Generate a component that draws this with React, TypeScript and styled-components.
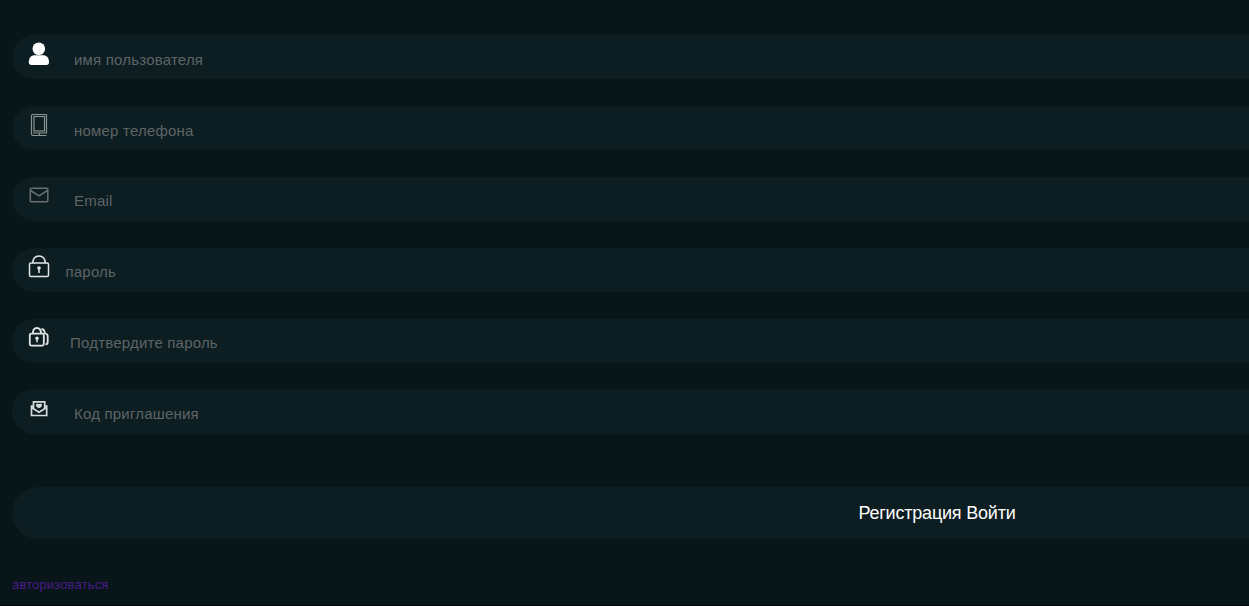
import React, { FC, ReactNode } from "react";
import styled, { createGlobalStyle } from "styled-components";

const GlobalStyle = createGlobalStyle`
  html,
  body {
    margin: 0;
    height: 100%;
    overflow: hidden;
    background-color: #081519;
  }

  * {
    box-sizing: border-box;
  }
`;

const Page = styled.main`
  width: 1874px;
  height: 606px;
  padding: 35.3px 12px 0;
  border-bottom: 1px solid #020709;
  font-family: "Liberation Sans", Arial, sans-serif;
`;

const Form = styled.form`
  display: flex;
  flex-direction: column;
`;

const Fields = styled.div`
  display: flex;
  flex-direction: column;
  gap: 26.68px;
`;

const Field = styled.label`
  display: flex;
  height: 44.15px;
  padding-left: 16px;
  border-radius: 22px;
  background-color: #0d1e22;
`;

const Icon = styled.svg`
  flex: none;
  width: 22px;
  height: 24px;
  margin-top: 7.2px;
  fill: none;
`;

const Input = styled.input<{ $gap: number }>`
  flex: 1;
  height: 20px;
  margin: 13.95px 0 0 ${({ $gap }) => $gap}px;
  padding: 0;
  border: none;
  outline: none;
  background: transparent;
  color: #fff;
  font-family: inherit;
  font-size: 15px;
  letter-spacing: 0.2px;

  &::placeholder {
    color: #5d6466;
    opacity: 1;
  }
`;

const Submit = styled.button`
  height: 52px;
  margin-top: 53.4px;
  padding: 2px 0 0;
  border: none;
  border-radius: 26px;
  background-color: #0d1e22;
  color: #fff;
  font-family: inherit;
  font-size: 18px;
  letter-spacing: -0.2px;
`;

const LoginLink = styled.a`
  align-self: flex-start;
  margin-top: 38px;
  color: #491c88;
  font-size: 13px;
  line-height: 15px;
  letter-spacing: 0.15px;
  text-decoration: none;
`;

type FieldType = {
  name: string;
  placeholder: string;
  gap: number;
  type?: string;
  icon: ReactNode;
};

const fields: FieldType[] = [
  {
    name: "username",
    placeholder: "имя пользователя",
    gap: 24,
    icon: (
      <g fill="#fff">
        <circle cx="10.8" cy="6.8" r="6.3" />
        <path d="M.8 20.3C.8 15.8 3.2 13.3 6.8 13.3h8.2c3.600 0 6 2.500 6 7 0 1.800-.9 2.700-2.700 2.700H3.500C1.700 23 .8 22.100 .8 20.300z" />
      </g>
    ),
  },
  {
    name: "phone",
    placeholder: "номер телефона",
    gap: 24,
    icon: (
      <g stroke="#89928f" strokeWidth="1.2">
        <path d="M18.500 1.500H4.500c-.6 0-1 .4-1 1v18.500c0 .8.500 1.500 1.500 1.500h13.500" />
        <path d="M18.500 1.500v18.500H5M11.500 20v2.500" />
        <rect x="6" y="3.500" width="10.500" height="14.500" />
      </g>
    ),
  },
  {
    name: "email",
    placeholder: "Email",
    gap: 24,
    icon: (
      <g stroke="#69706f" strokeWidth="1.5">
        <rect x="2.300" y="4.300" width="17.500" height="13.500" rx="1" />
        <path d="M2.500 6.500l8.500 5.300 8.500-5.300" />
      </g>
    ),
  },
  {
    name: "password",
    placeholder: "пароль",
    gap: 15.5,
    type: "password",
    icon: (
      <g stroke="#e1e5e6" strokeWidth="1.5">
        <rect x="1.500" y="8" width="19" height="13.500" rx="1.500" />
        <path d="M4.800 8C5 3.500 7.200 1 11 1s6 2.500 6.200 7" />
        <circle cx="11" cy="13" r="1.800" fill="#e1e5e6" stroke="none" />
        <path d="M11 13v5" />
      </g>
    ),
  },
  {
    name: "confirm",
    placeholder: "Подтвердите пароль",
    gap: 20,
    type: "password",
    icon: (
      <g stroke="#e1e5e6" strokeWidth="1.8">
        <rect x="1.800" y="7.600" width="14" height="12" rx="1.500" />
        <path d="M4.800 7.600C4.800 4 6 2 8.900 2s4.100 2 4.100 5.600" />
        <path d="M13.500 3c2.400.2 3.200 1.800 3.200 4 1.800.6 3 1.300 3 3v6c0 1.600-.8 2.300-2.200 2.300" />
        <circle cx="9" cy="12.300" r="1.700" fill="#e1e5e6" stroke="none" />
        <path d="M9 12.500v3.700" strokeWidth="1.5" />
      </g>
    ),
  },
  {
    name: "invite",
    placeholder: "Код приглашения",
    gap: 24,
    icon: (
      <g stroke="#d5dadb" strokeWidth="1.7">
        <path d="M5.500 9H3.500v9.500h15.200V9h-2" />
        <path d="M5.500 11.500V4.800h11.200v6.700" />
        <path d="M3.500 10.500l7.500 4.700 7.700-4.700" />
        <path
          d="M8 7.200l1.700-.7 1.300.8 1.300-.8 1.700.7-.4 2.600-2.600 1.400-2.600-1.400z"
          fill="#d5dadb"
          stroke="none"
        />
      </g>
    ),
  },
];

const App: FC = () => {
  return (
    <>
      <GlobalStyle />
      <Page>
        <Form>
          <Fields>
            {fields.map(({ name, placeholder, gap, type, icon }) => (
              <Field key={name}>
                <Icon viewBox="0 0 22 24">{icon}</Icon>
                <Input
                  $gap={gap}
                  name={name}
                  type={type || "text"}
                  placeholder={placeholder}
                />
              </Field>
            ))}
          </Fields>
          <Submit type="button">Регистрация Войти</Submit>
          <LoginLink>авторизоваться</LoginLink>
        </Form>
      </Page>
    </>
  );
};

export default App;
